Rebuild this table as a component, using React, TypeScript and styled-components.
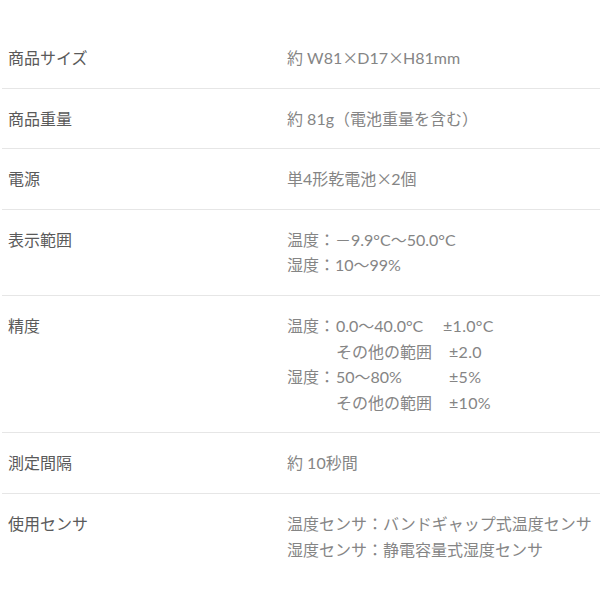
import React from "react";
import styled, { createGlobalStyle } from "styled-components";

const Global = createGlobalStyle`
  html, body { margin: 0; padding: 0; background: #fff; }
  body { font-family: Lato, "Noto Sans CJK JP", sans-serif; }
`;

const Table = styled.div`
  padding: 28px 0 0 2px;
  display: flex;
  flex-direction: column;
`;

const Row = styled.div<{ $last?: boolean }>`
  display: grid;
  grid-template-columns: 285px 1fr;
  padding: 17px 0;
  border-bottom: ${(p) => (p.$last ? "none" : "1px solid #e6e6e6")};
  font-size: 16px;
  line-height: 1.6;
`;

const Label = styled.div`
  padding-left: 6px;
  color: #5a5a5a;
`;

const Value = styled.div`
  color: #858585;
  white-space: nowrap;
`;

const Sym = styled.span`
  font-family: "Noto Sans CJK JP", sans-serif;
  letter-spacing: -1px;
`;

const Spec = styled.div`
  display: grid;
  grid-template-columns: 49px 113px auto;
`;

const Tol = styled.span<{ $shift?: number }>`
  margin-left: ${(p) => p.$shift ?? 0}px;
  letter-spacing: 0.3px;
`;

const precision = [
  { pre: "温度：", range: "0.0〜40.0°C", tol: "±1.0°C", shift: -6 },
  { pre: "", range: "その他の範囲", tol: "±2.0" },
  { pre: "湿度：", range: "50〜80%", tol: "±5%" },
  { pre: "", range: "その他の範囲", tol: "±10%" },
];

export default function App() {
  return (
    <>
      <Global />
      <Table>
        <Row>
          <Label>商品サイズ</Label>
          <Value>
            約 W81<Sym>×</Sym>D17<Sym>×</Sym>H81mm
          </Value>
        </Row>
        <Row>
          <Label>商品重量</Label>
          <Value>約 81g（電池重量を含む）</Value>
        </Row>
        <Row>
          <Label>電源</Label>
          <Value>
            単4形乾電池<Sym>×</Sym>2個
          </Value>
        </Row>
        <Row>
          <Label>表示範囲</Label>
          <Value>
            <div>温度：－9.9°C〜50.0°C</div>
            <div>湿度：10〜99%</div>
          </Value>
        </Row>
        <Row>
          <Label>精度</Label>
          <Value>
            {precision.map((r, i) => (
              <Spec key={i}>
                <span>{r.pre}</span>
                <span>{r.range}</span>
                <Tol $shift={r.shift}>{r.tol}</Tol>
              </Spec>
            ))}
          </Value>
        </Row>
        <Row>
          <Label>測定間隔</Label>
          <Value>約 10秒間</Value>
        </Row>
        <Row $last>
          <Label>使用センサ</Label>
          <Value>
            <div>温度センサ：バンドギャップ式温度センサ</div>
            <div>湿度センサ：静電容量式湿度センサ</div>
          </Value>
        </Row>
      </Table>
    </>
  );
}
